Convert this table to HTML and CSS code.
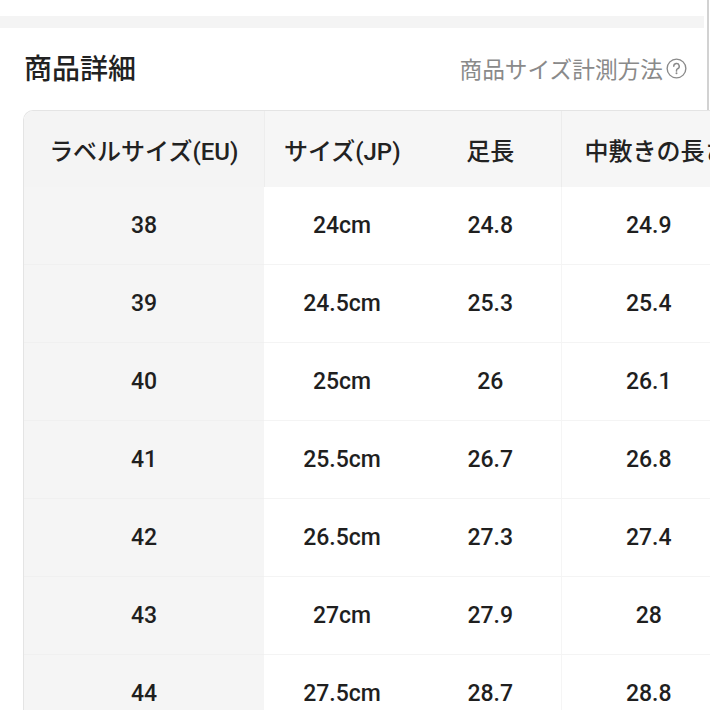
FILE: index.html
```html
<!DOCTYPE html>
<html lang="ja">
<head>
<meta charset="utf-8">
<title>商品詳細</title>
<link rel="stylesheet" href="styles.css">
</head>
<body>
<div class="top">
  <div class="gap"></div>
  <div class="band"></div>
  <div class="head">
    <h1 class="title">商品詳細</h1>
    <a class="link" href="#">商品サイズ計測方法<svg class="qicon" width="21" height="21" viewBox="0 0 20 20" aria-hidden="true"><circle cx="10" cy="10" r="8.9" fill="none" stroke="#8a8a8a" stroke-width="1.3"/><path d="M7.4 7.9a2.6 2.6 0 1 1 3.7 2.3c-.8.4-1.1.9-1.1 1.7v.6" fill="none" stroke="#8a8a8a" stroke-width="1.4" stroke-linecap="round"/><circle cx="10" cy="14.6" r="0.95" fill="#8a8a8a"/></svg></a>
  </div>
</div>
<div class="wrap">
  <table class="sizes">
    <colgroup>
      <col class="c1"><col class="c2"><col class="c3"><col class="c4">
    </colgroup>
    <thead>
      <tr>
        <th class="first">ラベルサイズ(EU)</th>
        <th>サイズ(JP)</th>
        <th>足長</th>
        <th class="last">中敷きの長さ</th>
      </tr>
    </thead>
    <tbody>
      <tr><td class="first">38</td><td>24cm</td><td>24.8</td><td class="last">24.9</td></tr>
      <tr><td class="first">39</td><td>24.5cm</td><td>25.3</td><td class="last">25.4</td></tr>
      <tr><td class="first">40</td><td>25cm</td><td>26</td><td class="last">26.1</td></tr>
      <tr><td class="first">41</td><td>25.5cm</td><td>26.7</td><td class="last">26.8</td></tr>
      <tr><td class="first">42</td><td>26.5cm</td><td>27.3</td><td class="last">27.4</td></tr>
      <tr><td class="first">43</td><td>27cm</td><td>27.9</td><td class="last">28</td></tr>
      <tr><td class="first">44</td><td>27.5cm</td><td>28.7</td><td class="last">28.8</td></tr>
    </tbody>
  </table>
</div>
</body>
</html>
```
FILE: styles.css
```css
html, body {
  margin: 0;
  padding: 0;
  background: #ffffff;
  overflow: hidden;
  width: 710px;
  height: 710px;
}
body {
  font-family: Roboto, "Noto Sans CJK JP", "Noto Sans", sans-serif;
  color: #1f1f1f;
}
.top {
  width: 707px;
  height: 110px;
  border-right: 2px solid #d2d2d2;
  display: flex;
  flex-direction: column;
}
.gap {
  height: 16px;
}
.band {
  height: 12px;
  background: #f4f4f4;
  margin-right: 3px;
}
.head {
  flex: 1;
  display: flex;
  align-items: center;
  justify-content: space-between;
  padding: 0 20px 4px 24px;
}
.title {
  margin: 0;
  font-size: 28px;
  font-weight: 500;
  color: #222;
}
.link {
  display: flex;
  align-items: center;
  gap: 3px;
  font-size: 22.7px;
  color: #8a8a8a;
  text-decoration: none;
  margin-top: 2px;
}
.qicon {
  display: block;
}
.wrap {
  margin-left: 23px;
  width: 720px;
  border-top: 1px solid #e4e4e4;
  border-left: 1px solid #e4e4e4;
  border-top-left-radius: 10px;
  overflow: hidden;
}
.sizes {
  border-collapse: collapse;
  table-layout: fixed;
  width: 722px;
}
.c1 { width: 240px; }
.c2 { width: 156px; }
.c3 { width: 141px; }
.c4 { width: 185px; }
.sizes th {
  height: 76px;
  padding: 0;
  font-size: 24px;
  font-weight: 500;
  color: #222;
  background: #f6f6f6;
  text-align: center;
  white-space: nowrap;
  overflow: hidden;
}
.sizes th.first {
  background: #f4f4f4;
  border-right: 1px solid #ededed;
}
.sizes th.last {
  border-left: 1px solid #ececec;
  text-align: left;
  padding-left: 23px;
}
.sizes td {
  height: 77px;
  padding: 0;
  font-size: 23px;
  font-weight: 500;
  color: #1f1f1f;
  text-align: center;
  border-bottom: 1px solid #f4f4f4;
  background: #ffffff;
}
.sizes td.first {
  background: #f5f5f5;
  border-bottom: 1px solid #f0f0f0;
}
.sizes td.last {
  border-left: 1px solid #f5f5f5;
  padding-right: 10px;
}
```
